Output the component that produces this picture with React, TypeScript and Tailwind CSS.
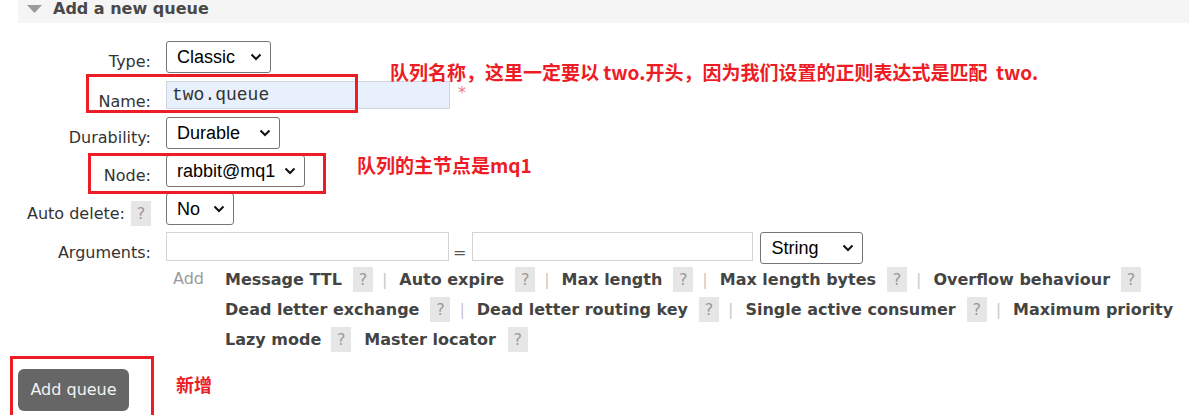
import React from 'react';

const Chevron: React.FC = () => (
  <svg width="12" height="8" viewBox="0 0 12 8" className="shrink-0">
    <path d="M1.5 1.5 L6 6 L10.5 1.5" fill="none" stroke="#111" strokeWidth="2" />
  </svg>
);

const Select: React.FC<{ value: string; className?: string }> = ({ value, className = '' }) => (
  <div
    className={`flex items-center justify-between border border-[#767676] rounded-[3px] bg-white pl-[10px] pr-[8px] font-['Liberation_Sans',Arial,sans-serif] text-[18px] text-black ${className}`}
  >
    <span>{value}</span>
    <Chevron />
  </div>
);

const Help: React.FC<{ className?: string }> = ({ className = '' }) => (
  <span
    className={`inline-flex h-[25px] w-[20px] shrink-0 items-center justify-center bg-[#e6e6e6] text-[16px] font-normal text-[#9a9a9a] ${className}`}
  >
    ?
  </span>
);

const Pipe: React.FC = () => <span className="ml-[9px] mr-[12px] font-normal text-[#c8c8c8]">|</span>;

interface RowProps {
  label: React.ReactNode;
  children: React.ReactNode;
  className?: string;
}

const Row: React.FC<RowProps> = ({ label, children, className = '' }) => (
  <div className={`flex items-start ${className}`}>
    <div className="flex w-[151px] shrink-0 items-start justify-end whitespace-nowrap">{label}</div>
    <div className="ml-[15px] flex items-start">{children}</div>
  </div>
);

const Label: React.FC<{ text: string }> = ({ text }) => (
  <span className="pt-[11px] leading-[19px]">{text}</span>
);

const ArgRow: React.FC<{ children: React.ReactNode }> = ({ children }) => (
  <div className="flex h-[30px] items-start whitespace-nowrap font-bold leading-[25px] text-[#444]">{children}</div>
);

export default function App() {
  return (
    <div className="relative h-[415px] w-[1197px] overflow-hidden bg-white font-['DejaVu_Sans',Verdana,sans-serif] text-[16px] text-[#333]">
      {/* section header */}
      <div className="ml-[18px] mr-[8px] flex h-[23px] items-start bg-[#f5f5f5]">
        <svg width="15" height="8" viewBox="0 0 15 8" className="ml-[9px] mt-[5px]">
          <path d="M0 0 H15 L7.5 8 Z" fill="#9a9a9a" />
        </svg>
        <span className="ml-[11px] text-[16px] font-bold leading-[17px] text-[#484848]">Add a new queue</span>
      </div>

      <div className="pt-[18px]">
        <Row label={<Label text="Type:" />}>
          <Select value="Classic" className="h-[32px] w-[105px]" />
        </Row>

        <Row label={<Label text="Name:" />} className="mt-[8px]">
          <div className="flex h-[28px] w-[284px] items-center border border-[#cfd3da] bg-[#e8f0fe] pl-[5px] font-['Liberation_Mono',monospace] text-[18px] text-[#333]">
            two.queue
          </div>
          <span className="ml-[8px] mt-[2px] leading-[19px] text-[#f07c7c]">*</span>
        </Row>

        <Row label={<Label text="Durability:" />} className="mt-[6px]">
          <Select value="Durable" className="h-[32px] w-[114px]" />
        </Row>

        <Row label={<Label text="Node:" />} className="mt-[6px]">
          <Select value="rabbit@mq1" className="h-[32px] w-[139px]" />
        </Row>

        <Row
          label={
            <>
              <Label text="Auto delete:" />
              <Help className="ml-[6px] mt-[8px]" />
            </>
          }
          className="mt-[6px]"
        >
          <Select value="No" className="h-[32px] w-[68px]" />
        </Row>

        <Row label={<Label text="Arguments:" />} className="mt-[6px]">
          <div className="h-[29px] w-[283px] border border-[#d4d4d4] bg-white" />
          <span className="ml-[4px] mr-[6px] pt-[11px] leading-[19px] text-[#555]">=</span>
          <div className="h-[29px] w-[281px] border border-[#d4d4d4] bg-white" />
          <Select value="String" className="ml-[7px] h-[32px] w-[103px]" />
        </Row>

        <div className="mt-[3px] flex">
          <span className="ml-[173px] mt-[2px] w-[52px] shrink-0 leading-[19px] text-[#9a9a9a]">Add</span>
          <div className="flex flex-col">
            <ArgRow>
              <span>Message TTL</span>
              <Help className="ml-[11px]" />
              <Pipe />
              <span>Auto expire</span>
              <Help className="ml-[11px]" />
              <Pipe />
              <span>Max length</span>
              <Help className="ml-[11px]" />
              <Pipe />
              <span>Max length bytes</span>
              <Help className="ml-[11px]" />
              <Pipe />
              <span>Overflow behaviour</span>
              <Help className="ml-[11px]" />
            </ArgRow>
            <ArgRow>
              <span>Dead letter exchange</span>
              <Help className="ml-[11px]" />
              <Pipe />
              <span>Dead letter routing key</span>
              <Help className="ml-[11px]" />
              <Pipe />
              <span>Single active consumer</span>
              <Help className="ml-[11px]" />
              <Pipe />
              <span>Maximum priority</span>
            </ArgRow>
            <ArgRow>
              <span>Lazy mode</span>
              <Help className="ml-[10px]" />
              <span className="ml-[13px]">Master locator</span>
              <Help className="ml-[12px]" />
            </ArgRow>
          </div>
        </div>

        <button className="ml-[18px] mt-[12px] flex h-[42px] w-[111px] items-center justify-center rounded-[6px] bg-[#666] text-[16px] text-[#f2f2f2]">
          Add queue
        </button>
      </div>

      {/* red annotations drawn over the form */}
      <div className="absolute left-[86px] top-[74px] h-[39px] w-[272px] border-[3px] border-[#ee1c25]" />
      <div className="absolute left-[88px] top-[153px] h-[41px] w-[238px] border-[3px] border-[#ee1c25]" />
      <div className="absolute left-[10px] top-[356px] h-[70px] w-[144px] border-[3px] border-[#ee1c25]" />

      <div className="absolute left-[390px] top-[62px] whitespace-pre font-['Noto_Sans_CJK_SC',sans-serif] text-[19px] font-bold leading-[20px] text-[#ee1c25]">
        队列名称，这里一定要以 two.开头，因为我们设置的正则表达式是匹配  two.
      </div>
      <div className="absolute left-[357px] top-[155px] font-['Noto_Sans_CJK_SC',sans-serif] text-[19px] font-bold leading-[20px] text-[#ee1c25]">
        队列的主节点是mq1
      </div>
      <div className="absolute left-[176px] top-[374px] font-['Noto_Sans_CJK_SC',sans-serif] text-[18px] font-bold leading-[20px] text-[#ee1c25]">
        新增
      </div>
    </div>
  );
}
